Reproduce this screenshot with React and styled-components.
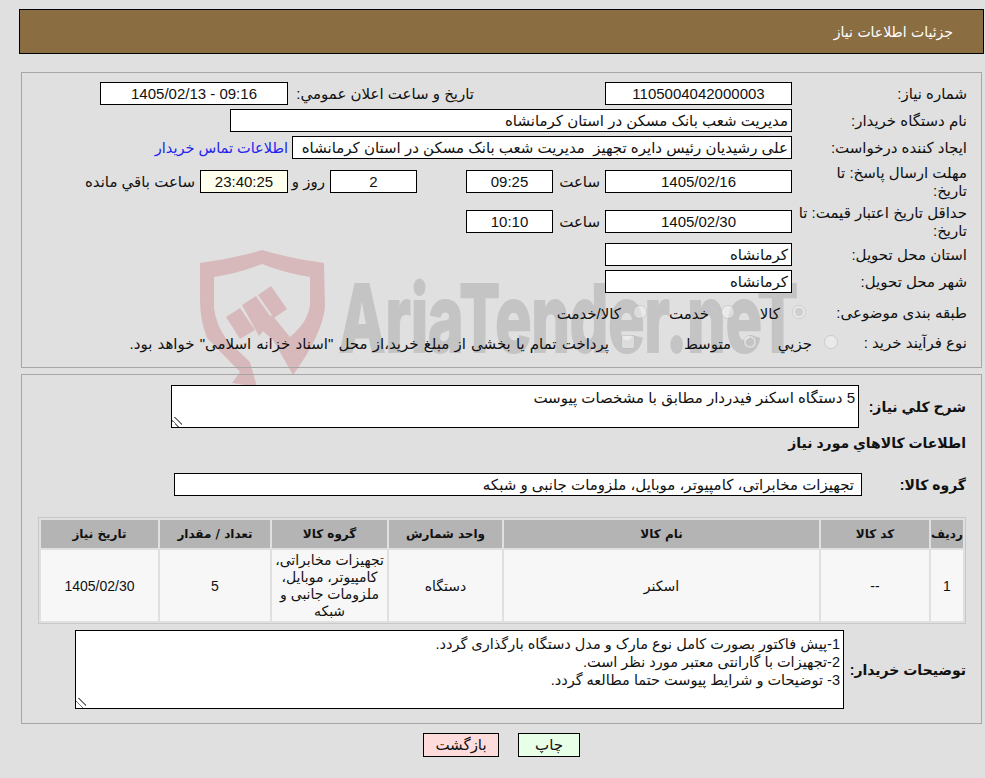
import React from 'react';
import styled, { createGlobalStyle } from 'styled-components';

const GlobalStyle = createGlobalStyle`
	html, body {
		margin: 0;
		padding: 0;
		background: #e0e0e0;
	}
	body {
		font-family: "Liberation Sans", "DejaVu Sans", sans-serif;
		font-size: 15px;
		color: #111;
	}
`;

const Watermark = () => (
	<WatermarkSvg viewBox="190 240 620 150">
		<path
			fill="#d8b9bb"
			fillRule="evenodd"
			d="M200 263 Q232 259 262 250 Q292 259 324 263 L325 307 Q322 335 293 375 L273 340 L256 325 L272 315 L290 337 Q308 322 310 305 L310 277 Q285 273 262 264 Q240 273 214 277 L214 308 Q216 325 227 340 L250 362 L257 387 L232 383 L240 372 L207 338 Q200 320 200 300 Z"
		/>
		<path fill="#d8b9bb" d="M226 317 L240 308 L255 330 L240 339 Z" />
		<path fill="#d8b9bb" d="M242 305 L256 296 L273 320 L259 336 Z" />
		<path fill="#d8b9bb" d="M258 295 L271 286 L287 309 L274 318 Z" />
		<WatermarkText x="339" y="352" textLength="459" lengthAdjust="spacingAndGlyphs">
			AriaTender.neT
		</WatermarkText>
	</WatermarkSvg>
);

const Field = ({ label, children }) => (
	<Row>
		<Label>{label}</Label>
		{children}
	</Row>
);

const App = () => {
	return (
		<Page dir="rtl">
			<GlobalStyle />
			<Watermark />
			<Header>جزئیات اطلاعات نیاز</Header>

			<TopPanel>
				<Field label="شماره نياز:">
					<ValueBox $width={187} $center>1105004042000003</ValueBox>
					<InlineLabel $width={317} $pad={131}>تاریخ و ساعت اعلان عمومي:</InlineLabel>
					<ValueBox $width={188} $center>09:16 - 1405/02/13</ValueBox>
				</Field>
				<Field label="نام دستگاه خریدار:">
					<ValueBox $width={562}>مدیریت شعب بانک مسکن در استان کرمانشاه</ValueBox>
				</Field>
				<Field label="ایجاد کننده درخواست:">
					<ValueBox $width={500}>علی رشیدیان رئیس دایره تجهیز&nbsp; مدیریت شعب بانک مسکن در استان کرمانشاه</ValueBox>
					<ContactLink href="#">اطلاعات تماس خریدار</ContactLink>
				</Field>
				<TallRow>
					<Label>مهلت ارسال پاسخ: تا<br />تاریخ:</Label>
					<ValueBox $width={187} $center>1405/02/16</ValueBox>
					<InlineLabel $width={52} $pad={5}>ساعت</InlineLabel>
					<ValueBox $width={87} $center>09:25</ValueBox>
					<Spacer $width={49} />
					<ValueBox $width={87} $center>2</ValueBox>
					<InlineLabel $width={42} $pad={5}>روز و</InlineLabel>
					<ValueBox $width={88} $center $timer>23:40:25</ValueBox>
					<InlineLabel $width={120} $pad={5}>ساعت باقي مانده</InlineLabel>
				</TallRow>
				<TallRow>
					<Label>حداقل تاریخ اعتبار قیمت: تا<br />تاریخ:</Label>
					<ValueBox $width={187} $center>1405/02/30</ValueBox>
					<InlineLabel $width={52} $pad={5}>ساعت</InlineLabel>
					<ValueBox $width={87} $center>10:10</ValueBox>
				</TallRow>
				<Field label="استان محل تحویل:">
					<ValueBox $width={187}>کرمانشاه</ValueBox>
				</Field>
				<Field label="شهر محل تحویل:">
					<ValueBox $width={187}>کرمانشاه</ValueBox>
				</Field>
				<OptionRow $height={30}>
					<OptionLabel $width={161}>طبقه بندی موضوعی:</OptionLabel>
					<Option $width={71}><input type="radio" name="category" defaultChecked disabled /><span>کالا</span></Option>
					<Option $width={88}><input type="radio" name="category" disabled /><span>خدمت</span></Option>
					<Option $width={120}><input type="radio" name="category" disabled /><span>کالا/خدمت</span></Option>
				</OptionRow>
				<OptionRow $height={22}>
					<OptionLabel $width={129}>نوع فرآیند خرید :</OptionLabel>
					<Option $width={81}><input type="radio" name="process" disabled /><span>جزيي</span></Option>
					<Option $width={122}><input type="radio" name="process" defaultChecked disabled /><span>متوسط</span></Option>
					<Option $spread><input type="checkbox" disabled /><span>پرداخت تمام یا بخشی از مبلغ خرید،از محل "اسناد خزانه اسلامی" خواهد بود.</span></Option>
				</OptionRow>
			</TopPanel>

			<BottomPanel>
				<DescriptionRow>
					<BoldLabel $width={107}>شرح کلي نیاز:</BoldLabel>
					<NoteArea $width={688} $height={43} $size={15} $top={3} readOnly defaultValue="5 دستگاه اسکنر فیدردار مطابق با مشخصات پیوست" />
				</DescriptionRow>
				<SectionTitle>اطلاعات کالاهاي مورد نیاز</SectionTitle>
				<GroupRow>
					<BoldLabel $width={104}>گروه کالا:</BoldLabel>
					<GroupBox>تجهیزات مخابراتی، کامپیوتر، موبایل، ملزومات جانبی و شبکه</GroupBox>
				</GroupRow>
				<ItemsTable>
					<colgroup>
						<col style={{ width: 32 }} />
						<col style={{ width: 108 }} />
						<col style={{ width: 315 }} />
						<col style={{ width: 113 }} />
						<col style={{ width: 115 }} />
						<col style={{ width: 110 }} />
						<col style={{ width: 117 }} />
					</colgroup>
					<thead>
						<tr>
							<th>ردیف</th>
							<th>کد کالا</th>
							<th>نام کالا</th>
							<th>واحد شمارش</th>
							<th>گروه کالا</th>
							<th>تعداد / مقدار</th>
							<th>تاریخ نیاز</th>
						</tr>
					</thead>
					<tbody>
						<tr>
							<td>1</td>
							<td>--</td>
							<td>اسکنر</td>
							<td>دستگاه</td>
							<td>تجهیزات مخابراتی، کامپیوتر، موبایل، ملزومات جانبی و شبکه</td>
							<td>5</td>
							<td>1405/02/30</td>
						</tr>
					</tbody>
				</ItemsTable>
				<BuyerRow>
					<BoldLabel $width={122}>توضیحات خریدار:</BoldLabel>
					<NoteArea
						$width={769}
						$height={79}
						$size={14.5}
						$top={4}
						readOnly
						defaultValue={'1-پیش فاکتور بصورت کامل نوع مارک و مدل دستگاه بارگذاری گردد.\n2-تجهیزات با گارانتی معتبر مورد نظر است.\n3- توضیحات و شرایط پیوست حتما مطالعه گردد.'}
					/>
				</BuyerRow>
			</BottomPanel>

			<Actions>
				<ActionButton $width={62} $bg="#e8ffe8">چاپ</ActionButton>
				<ActionButton $width={76} $bg="#ffdcdc">بازگشت</ActionButton>
			</Actions>
		</Page>
	);
};

export default App;

const Page = styled.div`
	position: relative;
	box-sizing: border-box;
	width: 985px;
	height: 778px;
	padding: 9px 1px 0 19px;
	overflow: hidden;
`;

const WatermarkSvg = styled.svg`
	position: absolute;
	left: 190px;
	top: 240px;
	width: 620px;
	height: 150px;
`;

const WatermarkText = styled.text`
	font-family: "Inter", sans-serif;
	font-weight: 800;
	font-size: 94px;
	fill: #c4c4c4;
	stroke: #c4c4c4;
	stroke-width: 2px;
	direction: ltr;
	unicode-bidi: bidi-override;
`;

const Header = styled.div`
	position: relative;
	box-sizing: border-box;
	height: 45px;
	border: 1px solid #000;
	background: #8b6d42;
	color: #fff;
	font-family: "DejaVu Sans", sans-serif;
	font-size: 14px;
	line-height: 44px;
	padding-right: 30px;
`;

const Panel = styled.div`
	position: relative;
	box-sizing: border-box;
	margin: 0 2px;
	border: 1px solid #a6a6a6;
`;

const TopPanel = styled(Panel)`
	height: 296px;
	margin-top: 18px;
	padding: 9px 14px 0 0;
	display: flex;
	flex-direction: column;
	gap: 4px;
`;

const BottomPanel = styled(Panel)`
	height: 350px;
	margin-top: 6px;
	padding: 10px 15px 0 0;
`;

const Row = styled.div`
	display: flex;
	align-items: center;
	min-height: 23px;
`;

const TallRow = styled(Row)`
	height: 36px;
`;

const Label = styled.div`
	flex: none;
	box-sizing: border-box;
	width: 175px;
	padding-top: 1px;
	line-height: 18px;
`;

const InlineLabel = styled.div`
	flex: none;
	box-sizing: border-box;
	width: ${(p) => p.$width}px;
	padding-right: ${(p) => p.$pad}px;
	padding-top: 1px;
	white-space: nowrap;
`;

const Spacer = styled.div`
	flex: none;
	width: ${(p) => p.$width}px;
`;

const ValueBox = styled.div`
	flex: none;
	box-sizing: border-box;
	width: ${(p) => p.$width}px;
	height: 23px;
	padding: 0 3px;
	border: 1px solid #000;
	background: ${(p) => (p.$timer ? '#ffffee' : '#fff')};
	line-height: 21px;
	white-space: nowrap;
	overflow: hidden;
	text-align: ${(p) => (p.$center ? 'center' : 'right')};
`;

const ContactLink = styled.a`
	margin-right: 4px;
	color: #2222ee;
	font-size: 14.5px;
	text-decoration: none;
	white-space: nowrap;
`;

const OptionRow = styled.div`
	display: flex;
	align-items: center;
	height: ${(p) => p.$height}px;
`;

const OptionLabel = styled.div`
	flex: none;
	width: ${(p) => p.$width}px;
	padding-top: 2px;
	white-space: nowrap;
`;

const Option = styled.label`
	flex: none;
	display: flex;
	align-items: center;
	gap: 12px;
	width: ${(p) => (p.$width ? `${p.$width}px` : 'auto')};
	word-spacing: ${(p) => (p.$spread ? '1px' : 'normal')};
	white-space: nowrap;

	input {
		flex: none;
		width: 14px;
		height: 14px;
		margin: 0;
		opacity: 0.75;
	}

	span {
		padding-top: 3px;
	}
`;

const DescriptionRow = styled.div`
	display: flex;
	align-items: center;
	height: 43px;
`;

const BoldLabel = styled.div`
	flex: none;
	width: ${(p) => p.$width}px;
	font-weight: 700;
	font-size: 14px;
	white-space: nowrap;
`;

const NoteArea = styled.textarea`
	flex: none;
	display: block;
	box-sizing: border-box;
	width: ${(p) => p.$width}px;
	height: ${(p) => p.$height}px;
	margin: 0;
	padding: ${(p) => p.$top}px 3px 2px;
	border: 1px solid #000;
	border-radius: 0;
	outline: none;
	background: #fff;
	color: #111;
	font-family: "Liberation Sans", "DejaVu Sans", sans-serif;
	font-size: ${(p) => p.$size}px;
	line-height: 18px;

	&::-webkit-resizer {
		background: linear-gradient(45deg, transparent 30%, #777 30%, #777 38%, transparent 38%, transparent 58%, #777 58%, #777 66%, transparent 66%) left bottom / 10px 10px no-repeat;
	}
`;

const SectionTitle = styled.div`
	margin-top: 6px;
	height: 18px;
	line-height: 18px;
	font-weight: 700;
	font-size: 14px;
`;

const GroupRow = styled.div`
	display: flex;
	align-items: center;
	margin-top: 21px;
	height: 23px;
`;

const GroupBox = styled.div`
	box-sizing: border-box;
	width: 688px;
	height: 23px;
	padding: 0 7px;
	border: 1px solid #000;
	background: #fff;
	line-height: 21px;
	white-space: nowrap;
`;

const ItemsTable = styled.table`
	box-sizing: border-box;
	width: 928px;
	height: 107px;
	margin-top: 21px;
	table-layout: fixed;
	border-collapse: separate;
	border-spacing: 2px;
	border: 1px solid #c8c8c8;
	font-size: 14px;

	th {
		height: 28px;
		padding: 0;
		background: #b4b4b4;
		font-family: "DejaVu Sans", sans-serif;
		font-size: 12px;
		font-weight: 700;
	}

	td {
		box-sizing: border-box;
		height: 71px;
		padding: 1px 2px 0;
		background: #f7f7f7;
		line-height: 17px;
		text-align: center;
	}
`;

const BuyerRow = styled.div`
	display: flex;
	align-items: center;
	margin-top: 6px;
`;

const Actions = styled.div`
	position: relative;
	display: flex;
	justify-content: center;
	gap: 19px;
	margin-top: 9px;
`;

const ActionButton = styled.button`
	box-sizing: border-box;
	width: ${(p) => p.$width}px;
	height: 24px;
	padding: 0;
	border: 1px solid #000;
	background: ${(p) => p.$bg};
	color: #111;
	font-family: "Liberation Sans", "DejaVu Sans", sans-serif;
	font-size: 15px;
`;
